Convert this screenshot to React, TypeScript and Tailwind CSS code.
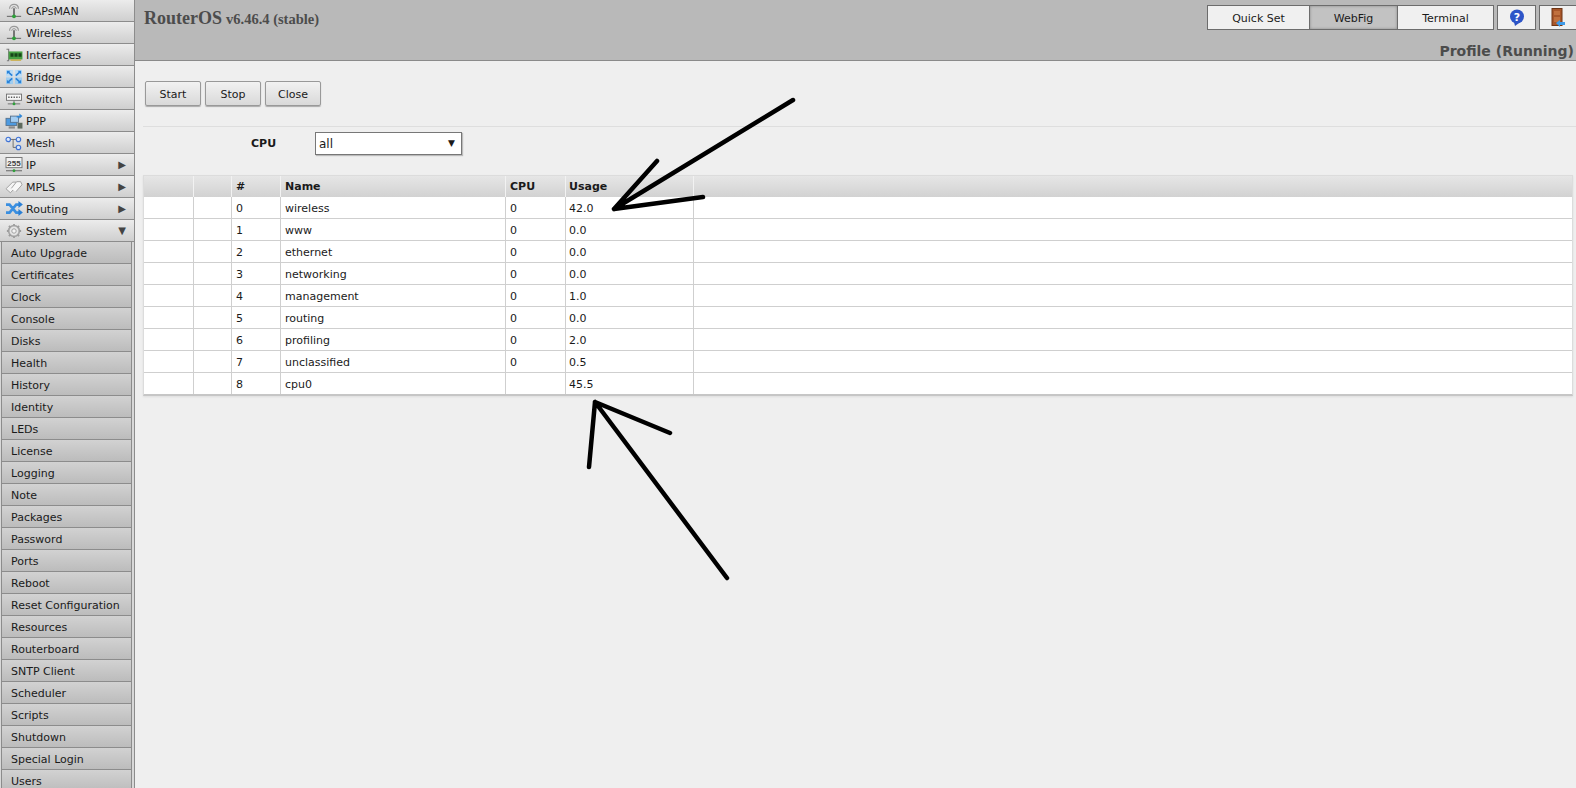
import type { ReactNode } from 'react';

const font = 'font-["DejaVu_Sans",Verdana,sans-serif]';

function Antenna() {
    return (
        <svg width="18" height="16" viewBox="0 0 20 18" fill="none">
            <path d="M5 6.500C5 3 7.500 1.500 10 1.500S15 3 15 6.500" stroke="#9a9a9a" strokeWidth="1.300" />
            <path d="M7.500 6.500C7.500 5 8.500 4.200 10 4.200s2.500 .8 2.500 2.300" stroke="#8a8a8a" />
            <path d="M10 6v8" stroke="#6a6a6a" strokeWidth="2" />
            <path d="M2 15h16" stroke="#555" />
            <circle cx="10" cy="15" r="2.200" fill="#2ea03a" />
        </svg>
    );
}

function InterfacesIcon() {
    return (
        <svg width="18" height="16" viewBox="0 0 20 18" fill="none">
            <path d="M1.500 2.500h2.500v13H2" stroke="#7c7c7c" strokeWidth="1.300" />
            <rect x="4" y="5" width="15.500" height="9" fill="#46a043" />
            <path d="M6 7h3.500v4H6zM10.500 7H14v4h-3.500zM15 7h3.500v4H15z" fill="#17451a" />
            <path d="M6 14h12v1.500H6z" fill="#c9a93a" />
        </svg>
    );
}

function BridgeIcon() {
    return (
        <svg width="18" height="16" viewBox="0 0 20 18" fill="none">
            <rect x="1" y="1" width="8" height="7.500" fill="#bcdcf5" />
            <rect x="11" y="1" width="8" height="7.500" fill="#bcdcf5" />
            <rect x="1" y="9.500" width="8" height="7.500" fill="#9fcdf0" />
            <rect x="11" y="9.500" width="8" height="7.500" fill="#9fcdf0" />
            <path d="M2 2h4L2 6zM18 2h-4l4 4zM2 16h4l-4-4zM18 16h-4l4-4z" fill="#2a82d8" />
            <path d="M3 3l5 4.500M17 3l-5 4.500M3 15l5-4.500M17 15l-5-4.500" stroke="#2a82d8" strokeWidth="1.800" />
        </svg>
    );
}

function SwitchIcon() {
    return (
        <svg width="18" height="16" viewBox="0 0 20 18" fill="none">
            <rect x="1.500" y="3.500" width="17" height="7" fill="#f6f6f6" stroke="#6e6e6e" />
            <path d="M3.500 7h13" stroke="#555" strokeWidth="1.500" strokeDasharray="1.500 1.500" />
            <path d="M10 11v3M3 14.500h14" stroke="#666" />
            <circle cx="10" cy="14.500" r="1.600" fill="#2ea03a" />
        </svg>
    );
}

function PppIcon() {
    return (
        <svg width="18" height="16" viewBox="0 0 20 18" fill="none">
            <rect x="1" y="6" width="12" height="8" fill="#4d9ae0" stroke="#56728e" />
            <rect x="6" y="3.500" width="9" height="7" fill="#a3cdf2" stroke="#56728e" />
            <path d="M13 3.500h3V0.500l3.500 3-3.500 3v-1.500h-3z" fill="#2f86d6" />
            <rect x="14" y="11" width="5.500" height="6.500" fill="#5e6a5e" />
            <path d="M4 15h7v2.500H4z" fill="#8a8a8a" />
        </svg>
    );
}

function MeshIcon() {
    return (
        <svg width="18" height="16" viewBox="0 0 20 18" fill="none">
            <path d="M5 5h7.500M9 5v9h4" stroke="#666" />
            <circle cx="3.500" cy="5" r="2.500" fill="#dce9fb" stroke="#3f72d4" strokeWidth="1.300" />
            <circle cx="15" cy="5" r="2.500" fill="#dce9fb" stroke="#3f72d4" strokeWidth="1.300" />
            <circle cx="15" cy="14" r="2.500" fill="#dce9fb" stroke="#3f72d4" strokeWidth="1.300" />
        </svg>
    );
}

function IpIcon() {
    return (
        <svg width="18" height="16" viewBox="0 0 20 18" fill="none">
            <rect x="1" y="0.500" width="18" height="11.500" fill="#f2f2f2" stroke="#6e6e6e" />
            <text x="10" y="9.800" fontSize="9" fontWeight="700" textAnchor="middle" fill="#444" fontFamily="Liberation Sans">255</text>
            <path d="M1 15.500h18" stroke="#555" />
            <circle cx="10" cy="15.500" r="1.600" fill="#2ea03a" />
        </svg>
    );
}

function MplsIcon() {
    return (
        <svg width="18" height="16" viewBox="0 0 20 18" fill="none">
            <path d="M1 11l7.500-7.500h4l1 4L6 15.500z" fill="#f4f4f4" stroke="#9a9a9a" />
            <path d="M7 10.500l6-7.500H17.500l1.500 3.500-7 8" fill="#f8f8f8" stroke="#9a9a9a" />
        </svg>
    );
}

function RoutingIcon() {
    return (
        <svg width="18" height="16" viewBox="0 0 20 18" fill="none">
            <path d="M1 4h4l7.500 9H16M1 13h4l7.500-9H16" stroke="#3a8fe0" strokeWidth="3" />
            <path d="M15 0L20 4l-5 4zM15 9l5 4-5 4z" fill="#2a7fd4" />
        </svg>
    );
}

function GearIcon() {
    return (
        <svg width="18" height="16" viewBox="0 0 20 18" fill="none">
            <circle cx="10" cy="9" r="6" stroke="#a6a6a6" strokeWidth="2" fill="#e6e6e6" />
            <circle cx="10" cy="9" r="2.500" stroke="#999" fill="#f4f4f4" />
            <path d="M10 1v2M10 15v2M2 9h2M16 9h2M4.300 3.300l1.500 1.500M14.200 13.200l1.500 1.500M15.700 3.300l-1.500 1.500M5.800 13.200l-1.500 1.500" stroke="#9c9c9c" strokeWidth="2" />
        </svg>
    );
}

function HelpIcon() {
    return (
        <svg width="16" height="18" viewBox="0 0 16 18">
            <path d="M5 13l1 4 4-3z" fill="#2a4fc0" />
            <circle cx="8" cy="7.500" r="7" fill="#2d55c8" />
            <text x="8" y="11.500" fontSize="11" fontWeight="700" textAnchor="middle" fill="#fff" fontFamily="DejaVu Sans">?</text>
        </svg>
    );
}

function DoorIcon() {
    return (
        <svg width="14" height="20" viewBox="0 0 14 20">
            <rect x="1" y="0.500" width="10" height="17" fill="#a8562a" stroke="#6e3515" />
            <path d="M3 3h6v4H3zM3 9h6v5H3z" fill="#c0703e" />
            <path d="M5 15l4-3v2h5v3H9v2z" fill="#3f9be8" />
        </svg>
    );
}

const topItems: { label: string; icon: ReactNode; more?: string }[] = [
    { label: 'CAPsMAN', icon: <Antenna /> },
    { label: 'Wireless', icon: <Antenna /> },
    { label: 'Interfaces', icon: <InterfacesIcon /> },
    { label: 'Bridge', icon: <BridgeIcon /> },
    { label: 'Switch', icon: <SwitchIcon /> },
    { label: 'PPP', icon: <PppIcon /> },
    { label: 'Mesh', icon: <MeshIcon /> },
    { label: 'IP', icon: <IpIcon />, more: 'right' },
    { label: 'MPLS', icon: <MplsIcon />, more: 'right' },
    { label: 'Routing', icon: <RoutingIcon />, more: 'right' },
    { label: 'System', icon: <GearIcon />, more: 'down' },
];

const subItems = [
    'Auto Upgrade', 'Certificates', 'Clock', 'Console', 'Disks', 'Health', 'History', 'Identity', 'LEDs',
    'License', 'Logging', 'Note', 'Packages', 'Password', 'Ports', 'Reboot', 'Reset Configuration', 'Resources',
    'Routerboard', 'SNTP Client', 'Scheduler', 'Scripts', 'Shutdown', 'Special Login', 'Users',
];

const rows = [
    ['0', 'wireless', '0', '42.0'],
    ['1', 'www', '0', '0.0'],
    ['2', 'ethernet', '0', '0.0'],
    ['3', 'networking', '0', '0.0'],
    ['4', 'management', '0', '1.0'],
    ['5', 'routing', '0', '0.0'],
    ['6', 'profiling', '0', '2.0'],
    ['7', 'unclassified', '0', '0.5'],
    ['8', 'cpu0', '', '45.5'],
];

const colWidths = ['w-[50px]', 'w-[38px]', 'w-[49px]', 'w-[225px]', 'w-[60px]', 'w-[128px]'];

function Sidebar() {
    return (
        <div className="w-[135px] shrink-0 h-full overflow-hidden bg-[#d8d8d8] border-r border-[#8c8c8c]">
            {topItems.map((item) => (
                <div
                    key={item.label}
                    className="h-[22px] flex items-center border-b border-[#8c8c8c] bg-gradient-to-b from-[#ececec] to-[#cfcfcf] pl-[5px] pr-[8px]"
                >
                    <span className="w-[21px] shrink-0 flex items-center">{item.icon}</span>
                    <span className="flex-1 pt-[4px]">{item.label}</span>
                    {item.more === 'right' && <span className="text-[10px] leading-none text-[#444] pt-[1px]">▶</span>}
                    {item.more === 'down' && <span className="text-[10px] leading-none text-[#444] pt-[1px]">▼</span>}
                </div>
            ))}
            <div className="ml-[1px] mr-[2px] border-x border-[#8c8c8c]">
                {subItems.map((label) => (
                    <div
                        key={label}
                        className="h-[22px] flex items-center pl-[9px] pt-[4px] border-b border-[#8c8c8c] bg-gradient-to-b from-[#d2d2d2] to-[#bcbcbc]"
                    >
                        {label}
                    </div>
                ))}
            </div>
        </div>
    );
}

function Tab({ children, className }: { children?: ReactNode; className: string }) {
    return <div className={`h-[25px] flex items-center justify-center border border-[#6c6c6c] ${className}`}>{children}</div>;
}

function Header() {
    return (
        <div className="h-[61px] shrink-0 bg-[#b9b9b9] border-b border-[#8a8a8a] pl-[9px]">
            <div className="flex justify-between h-[41px]">
                <div className='pt-[6px] flex items-baseline gap-[4px] text-[#4c4c4c] font-bold font-["Liberation_Serif",serif]'>
                    <span className="text-[18px] leading-[24px]">RouterOS</span>
                    <span className="text-[14.5px]">v6.46.4 (stable)</span>
                </div>
                <div className="flex items-start pt-[5px]">
                    <Tab className="w-[103px] pt-[4px] bg-[#f0f0f0]">Quick Set</Tab>
                    <Tab className="w-[89px] pt-[4px] -ml-px bg-[#c2c2c2] shadow-[inset_0_0_3px_#888]">WebFig</Tab>
                    <Tab className="w-[97px] pt-[4px] -ml-px bg-[#f0f0f0]">Terminal</Tab>
                    <Tab className="w-[39px] ml-[3px] bg-[#f0f0f0]"><HelpIcon /></Tab>
                    <Tab className="w-[37px] ml-[3px] border-r-0 bg-[#f0f0f0]"><DoorIcon /></Tab>
                </div>
            </div>
            <div className="text-right pr-[2px] text-[14px] leading-[20px] font-bold text-[#4c4c4c]">Profile (Running)</div>
        </div>
    );
}

function ActionButton({ label }: { label: string }) {
    return (
        <div className="w-[56px] h-[25px] flex items-center justify-center pt-[4px] rounded-[2px] border border-[#999] bg-gradient-to-b from-[#f2f2f2] to-[#d9d9d9] shadow-[0_1px_1px_#aaa]">
            {label}
        </div>
    );
}

function ProfileTable() {
    return (
        <div className="mt-[21px] ml-[8px] mr-[3px] border border-[#dcdcdc] border-b-[2px] border-b-[#c6c6c6] bg-white shadow-[0_1px_2px_#ddd]">
            <div className="h-[21px] flex font-bold bg-gradient-to-b from-[#e6e6e6] to-[#d2d2d2]">
                {['', '', '#', 'Name', 'CPU', 'Usage'].map((h, i) => (
                    <div key={i} className={`${colWidths[i]} shrink-0 flex items-center pt-[1px] ${i === 5 ? 'pl-[3px]' : 'pl-[4px]'} border-r border-[#f2f2f2]`}>{h}</div>
                ))}
                <div className="flex-1" />
            </div>
            {rows.map((r, idx) => (
                <div key={r[0]} className={`flex ${idx < rows.length - 1 ? 'h-[22px] border-b border-[#cfcfcf]' : 'h-[21px]'}`}>
                    {['', '', ...r].map((c, i) => (
                        <div key={i} className={`${colWidths[i]} shrink-0 flex items-center pt-[4px] ${i === 5 ? 'pl-[3px]' : 'pl-[4px]'} border-r border-[#cfcfcf]`}>{c}</div>
                    ))}
                    <div className="flex-1" />
                </div>
            ))}
        </div>
    );
}

export default function App() {
    return (
        <div className={`${font} relative w-[1576px] h-[788px] overflow-hidden flex text-[11px] text-[#1a1a1a] bg-[#efefef]`}>
            <Sidebar />
            <div className="flex-1 flex flex-col min-w-0">
                <Header />
                <div className="flex-1">
                    <div className="flex gap-[4px] ml-[10px] mt-[20px]">
                        <ActionButton label="Start" />
                        <ActionButton label="Stop" />
                        <ActionButton label="Close" />
                    </div>
                    <div className="ml-[8px] mt-[20px] border-t border-[#dedede] h-0" />
                    <div className="flex items-center mt-[5px] h-[22px]">
                        <span className="w-[180px] pl-[116px] pt-[3px] font-bold">CPU</span>
                        <div className="w-[147px] h-[23px] flex items-center justify-between pl-[3px] pr-[4px] pt-[2px] bg-white border border-[#777] shadow-[1px_1px_1px_#bbb] text-[12px]">
                            <span>all</span>
                            <span className="text-[9px] pr-[2px]">▼</span>
                        </div>
                    </div>
                    <ProfileTable />
                </div>
            </div>
            <svg className="absolute inset-0 pointer-events-none" width="1576" height="788" fill="none" stroke="#000" strokeWidth="4.500" strokeLinecap="round">
                <path d="M793 100L614 209M657 161L614 209M703 197L614 209" />
                <path d="M727 578L595 402M589 467L595 402M670 433L595 402" />
            </svg>
        </div>
    );
}
